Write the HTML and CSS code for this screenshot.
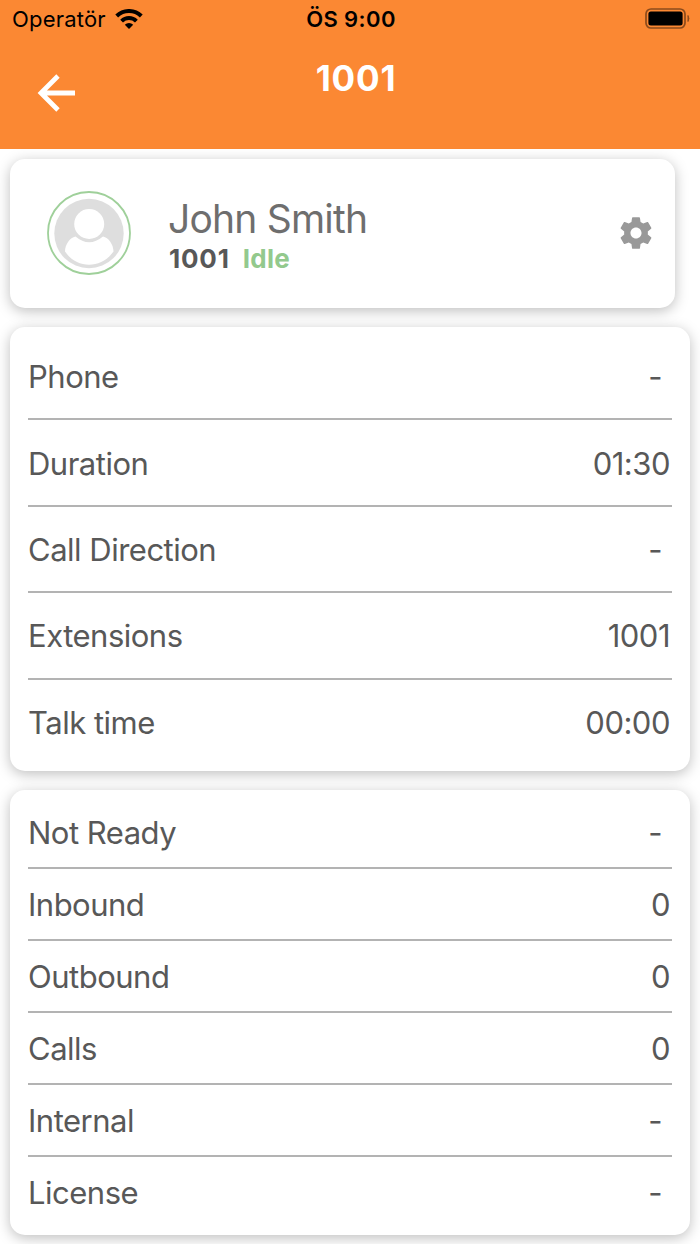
FILE: index.html
```html
<!DOCTYPE html>
<html lang="en">
<head>
    <meta charset="UTF-8">
    <meta name="viewport" content="width=device-width, initial-scale=1.0">
    <title>1001</title>
    <link rel="stylesheet" href="styles.css">
</head>
<body>
    <header class="header">
        <div class="status-bar">
            <div class="carrier">
                <span class="carrier-name">Operatör</span>
                <svg class="wifi" width="28" height="20" viewBox="0 0 28 20">
                    <path d="M14 20l-4.200-4.200a6 6 0 0 1 8.400 0z" fill="#000"/>
                    <path d="M6.600 12.100a10.600 10.600 0 0 1 14.800 0M1.700 7a17.600 17.600 0 0 1 24.600 0" fill="none" stroke="#000" stroke-width="4"/>
                </svg>
            </div>
            <span class="time">ÖS 9:00</span>
            <svg class="battery" width="45" height="22" viewBox="0 0 45 22">
                <rect x="1" y="1" width="39" height="19" rx="5" fill="none" stroke="#8c4b1c" stroke-width="1.7"/>
                <rect x="3.4" y="3.4" width="34.2" height="14.2" rx="2.5" fill="#000"/>
                <path d="M43 7.500q1.800 3 0 6z" fill="#8c4b1c" stroke="#8c4b1c"/>
            </svg>
        </div>
        <div class="nav">
            <a class="back" href="#">
                <svg width="38" height="38" viewBox="0 0 38 38">
                    <path d="M21 2L4 19l17 17M4 19h34" fill="none" stroke="#fff" stroke-width="4.800"/>
                </svg>
            </a>
            <h1>1001</h1>
        </div>
    </header>

    <main class="content">
        <section class="card agent">
            <svg class="avatar" width="84" height="84" viewBox="0 0 84 84">
                <circle cx="42" cy="42" r="41" fill="#fff" stroke="#9fd09a" stroke-width="1.800"/>
                <circle cx="42" cy="42.500" r="34.700" fill="#dedede"/>
                <circle cx="42.200" cy="33" r="15" fill="#fff"/>
                <path d="M28.500 45.500q13.500 11.500 27.500 0c5.500 1 10.500 8 10.500 15-12 17.500-37 17.500-48.500 0 0-7 5-14 10.500-15z" fill="#fff"/>
            </svg>
            <div class="agent-info">
                <h2>John Smith</h2>
                <p><span class="number">1001</span><span class="state">Idle</span></p>
            </div>
            <svg class="gear" width="38" height="38" viewBox="0 0 24 24">
                <path fill="#999" d="M19.430 12.980c.04-.32.07-.64.07-.98s-.03-.66-.07-.98l2.110-1.650c.19-.15.24-.42.12-.64l-2-3.460c-.12-.22-.39-.3-.61-.22l-2.490 1c-.52-.4-1.080-.73-1.690-.98l-.38-2.650C14.460 2.180 14.250 2 14 2h-4c-.25 0-.46.18-.49.42l-.38 2.650c-.61.25-1.170.59-1.690.98l-2.490-1c-.23-.09-.49 0-.61.22l-2 3.460c-.13.22-.07.49.12.64l2.110 1.650c-.04.32-.07.65-.07.98s.03.66.07.98l-2.110 1.650c-.19.15-.24.42-.12.64l2 3.460c.12.22.39.3.61.22l2.490-1c.52.4 1.080.73 1.690.98l.38 2.650c.03.24.24.42.49.42h4c.25 0 .46-.18.49-.42l.38-2.650c.61-.25 1.170-.59 1.690-.98l2.490 1c.23.09.49 0 .61-.22l2-3.460c.12-.22.07-.49-.12-.64l-2.110-1.650zM12 15.500c-1.930 0-3.500-1.570-3.500-3.500s1.570-3.500 3.500-3.500 3.500 1.570 3.500 3.500-1.570 3.500-3.500 3.500z"/>
            </svg>
        </section>

        <section class="card list call">
            <div class="row"><span>Phone</span><span class="empty">-</span></div>
            <div class="row"><span>Duration</span><span>01:30</span></div>
            <div class="row"><span>Call Direction</span><span class="empty">-</span></div>
            <div class="row"><span>Extensions</span><span>1001</span></div>
            <div class="row"><span>Talk time</span><span>00:00</span></div>
        </section>

        <section class="card list stats">
            <div class="row"><span>Not Ready</span><span class="empty">-</span></div>
            <div class="row"><span>Inbound</span><span>0</span></div>
            <div class="row"><span>Outbound</span><span>0</span></div>
            <div class="row"><span>Calls</span><span>0</span></div>
            <div class="row"><span>Internal</span><span class="empty">-</span></div>
            <div class="row"><span>License</span><span class="empty">-</span></div>
        </section>
    </main>
</body>
</html>
```
FILE: styles.css
```css
* {
    margin: 0;
    padding: 0;
    box-sizing: border-box;
    font-family: Inter, "Liberation Sans", sans-serif;
}
body {
    height: 1244px;
    background: #fff;
    color: #585858;
    overflow: hidden;
}
.header {
    height: 149px;
    background: #fb8833;
}
.status-bar {
    display: grid;
    grid-template-columns: 1fr auto 1fr;
    align-items: center;
    height: 38px;
    padding: 0 10px 0 12px;
    color: #000;
    font-size: 22px;
}
.carrier {
    display: flex;
    align-items: center;
    gap: 9px;
}
.carrier-name {
    letter-spacing: 0.2px;
}
.time {
    font-weight: 600;
    letter-spacing: 0.4px;
}
.battery {
    justify-self: end;
}
.nav {
    display: grid;
    grid-template-columns: 106px 1fr 94px;
    padding: 18px 0 0;
}
.back {
    height: 38px;
    margin: 18px 0 0 37px;
}
h1 {
    color: #fff;
    font-size: 35px;
    font-weight: 700;
    line-height: 44px;
    letter-spacing: 0.8px;
    text-align: center;
}
.content {
    display: flex;
    flex-direction: column;
    gap: 19px;
    padding: 10px 10px 0;
}
.card {
    background: #fff;
    border-radius: 15px;
    box-shadow: 0 3px 14px rgba(0, 0, 0, 0.26);
}
.agent {
    display: flex;
    align-items: center;
    width: 665px;
    height: 149px;
    padding: 0 20px 0 37px;
}
.avatar,
.gear {
    margin-bottom: 1px;
}
.agent-info {
    flex: 1;
    margin-left: 37px;
    padding-top: 5px;
}
.agent-info h2 {
    color: #6e6e6e;
    font-size: 39px;
    font-weight: 400;
    line-height: 46px;
    letter-spacing: -0.8px;
}
.agent-info p {
    margin-left: 1px;
    font-size: 26px;
    font-weight: 650;
    line-height: 34px;
}
.number {
    letter-spacing: 0.8px;
}
.state {
    margin-left: 13px;
    color: #93c98d;
    letter-spacing: 0.3px;
}
.list {
    display: flex;
    flex-direction: column;
    padding: 7px 18px 6px;
}
.call {
    height: 444px;
    padding-bottom: 5px;
}
.stats {
    height: 445px;
}
.row {
    display: flex;
    flex: 1;
    align-items: center;
    justify-content: space-between;
    padding: 1px 2px 0 0;
    border-bottom: 2px solid #b3b3b3;
    font-size: 31px;
    letter-spacing: -0.5px;
}
.row:last-child {
    border-bottom-color: transparent;
}
.empty {
    padding-right: 8px;
}
```
